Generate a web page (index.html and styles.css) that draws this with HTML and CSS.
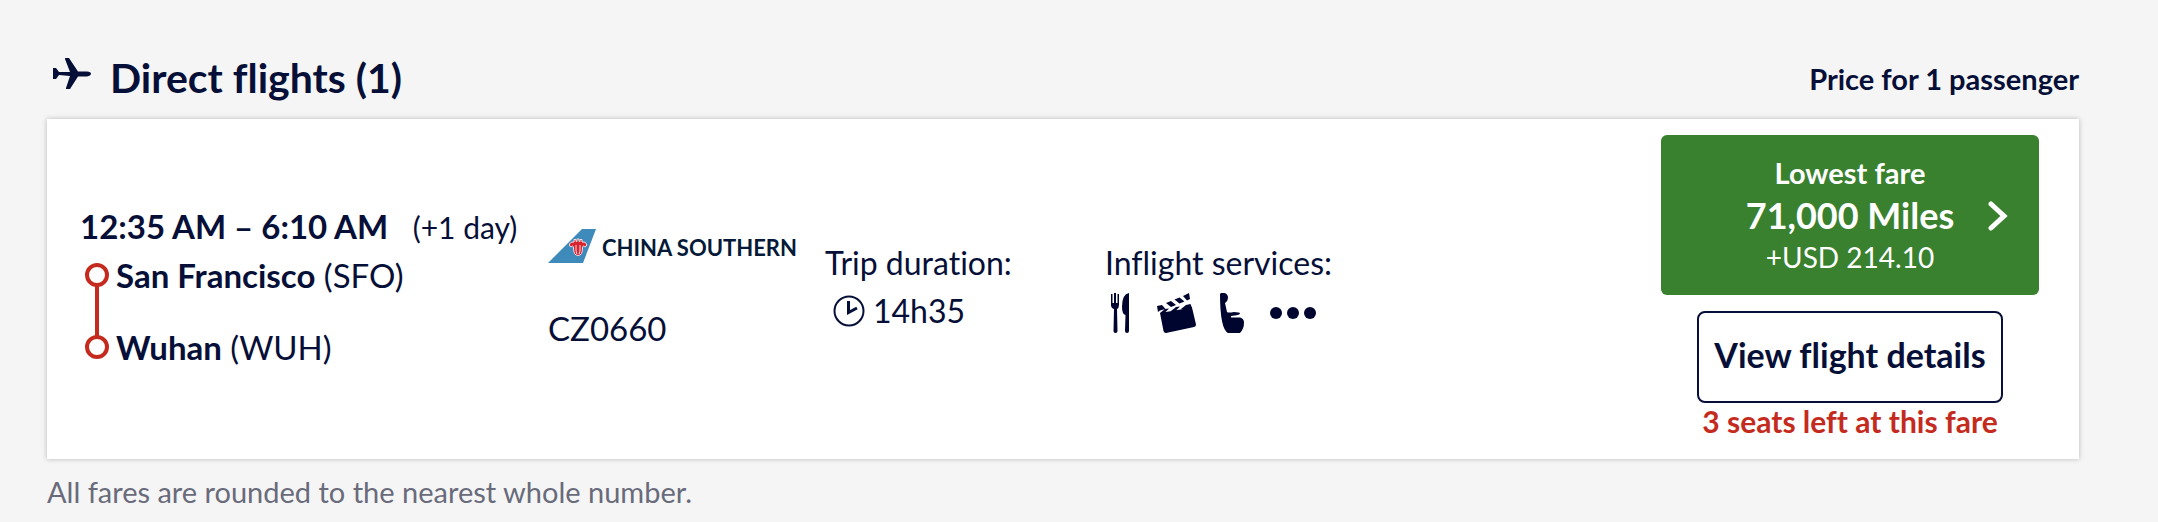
FILE: index.html
```
<!DOCTYPE html>
<html lang="en">
<head>
	<meta charset="utf-8">
	<title>Direct flights</title>
	<link rel="stylesheet" href="styles.css">
</head>
<body>
	<main class="results">
		<header class="results-head">
			<h2 class="title">
				<svg class="plane" viewBox="0 0 38 32" aria-hidden="true"><path d="M0 10h3l3 4h11L12 1V0h4l9 13.500h9c2.500 0 4 1 4 2.200s-1.500 2.300-4 2.800h-9L17 31h-4v-1l4-12L6 17l-3 4H0z"/></svg>
				Direct flights (1)
			</h2>
			<p class="price-for">Price for 1 passenger</p>
		</header>

		<section class="flight">
			<div class="route">
				<p class="times"><b>12:35 AM – 6:10 AM</b> <span class="plus-day">(+1 day)</span></p>
				<ul class="stops">
					<li class="stop"><b>San Francisco</b> (SFO)</li>
					<li class="stop"><b>Wuhan</b> (WUH)</li>
				</ul>
			</div>

			<div class="airline">
				<div class="carrier">
					<svg class="tail" viewBox="0 0 48 34" aria-hidden="true">
						<path fill="#3d8abb" d="M0 34 34 0h14L35 34z"/>
						<path fill="#d8232f" stroke="#f3dcdf" stroke-width="1" d="M21.500 15q1-2.500 4.500-2V10.500h2v2h1V10h2v2.500h1v-2h2V13q4-.5 4.500 2 .5 2.500-1.500 3l-1.500-1q-1 0-1 2 0 7.500-4.500 7.500T25.500 19q0-2-1-2L23 18q-2-.5-1.500-3z"/>
						<path fill="none" stroke="#f3dcdf" stroke-width="1" d="M28 16v5q0 2 1 4M32 16v5q0 2-1 4"/>
					</svg>
					<span class="carrier-name">CHINA SOUTHERN</span>
				</div>
				<p class="flight-no">CZ0660</p>
			</div>

			<div class="duration">
				<p>Trip duration:</p>
				<p class="time-taken">
					<svg class="clock" viewBox="0 0 32 32" aria-hidden="true"><circle cx="16" cy="16" r="14.500"/><path d="M15.500 6v11.500l8.500-4.500"/></svg>
					14h35
				</p>
			</div>

			<div class="services">
				<p>Inflight services:</p>
				<div class="service-icons">
					<svg class="meal" viewBox="0 0 18 40" role="img" aria-label="Meal"><path d="M0 1h1.500v9H3V0h2v10h1.500V1H8v11q0 3-2 4l.5 22q0 2-2 2t-2-2L3 16q-3-1-3-4zM18 0v38q0 2-2 2t-2-2l.5-16Q11 21 11 14q0-13 7-14z"/></svg>
					<svg class="film" viewBox="0 0 39 40" role="img" aria-label="Films"><path d="M3 20l32-5.500 4 17q0 2-2 2.500L9 40q-2 0-2.500-2zM0 13l5-1 3.500 4-5.500 1.500L1 19zM9 10l5-2 5 4-5 2zM17.500 6.500l5-2 5 4-5 2zM26 3l6-3 1 6-3 1.500zM3 20l5-4 4-.5-4 4zM14 18l5-4 4-.5-4 4zM24 16l5-4 4.500-1 1.500 4-7 1.500z"/></svg>
					<svg class="seat" viewBox="0 0 24 40" role="img" aria-label="Seat"><path d="M1 0q6-1 7 4 0 4-3 6l2 9q1 1 7 0 6 0 6 1.500T11 23v1.500h9q4 1 4 5Q24 36 20 40H8Q4 38 2 28 0 18 0 1z"/></svg>
					<svg class="more" viewBox="0 0 46 12" role="img" aria-label="More services"><circle cx="6" cy="6" r="6"/><circle cx="23" cy="6" r="6"/><circle cx="40" cy="6" r="6"/></svg>
				</div>
			</div>

			<div class="fare">
				<button class="fare-btn" type="button">
					<span class="fare-label">Lowest fare</span>
					<span class="miles">71,000 Miles</span>
					<span class="cash">+USD 214.10</span>
					<svg class="chevron" viewBox="0 0 20 30" aria-hidden="true"><path d="M3 3l13 12L3 27"/></svg>
				</button>
				<button class="details-btn" type="button">View flight details</button>
				<p class="seats-left">3 seats left at this fare</p>
			</div>
		</section>

		<p class="note">All fares are rounded to the nearest whole number.</p>
	</main>
</body>
</html>
```
FILE: styles.css
```
*, *::before, *::after{box-sizing: border-box;}

body{
	margin: 0;
	background-color: #f5f5f5;
	color: #050f37;
	font-family: Lato, "Open Sans", sans-serif;
	font-size: 32px;
	font-variant-ligatures: none;
	line-height: 48px;
}
h2, p, ul{margin: 0; padding: 0;}
svg{fill: currentColor; flex: none; display: block;}

.results{padding: 53px 79px 0 47px;}

.results-head{
	display: flex;
	justify-content: space-between;
	padding-bottom: 14px;
}
.title{
	display: flex;
	gap: 19px;
	padding-left: 6px;
	font-size: 41px;
	line-height: 50px;
}
.plane{width: 38px; height: 32px; margin-top: 5px;}
.price-for{
	font-size: 29px;
	font-weight: bold;
	line-height: 52px;
}

.flight{
	display: grid;
	grid-template-columns: 468fr 277fr 280fr 556fr 378px;
	align-items: center;
	padding: 16px 40px 20px 33px;
	background-color: white;
	box-shadow: 0 0 5px rgba(0,0,0,0.25);
}

.route, .airline{padding-bottom: 2px;}
.route{font-size: 33px;}
.times{white-space: nowrap;}
.plus-day{margin-left: 16px; font-size: 30px;}
.stops{
	display: flex;
	flex-direction: column;
	gap: 24px;
	list-style: none;
}
/* red dot and the line between the two airports */
.stop{position: relative; padding-left: 36px;}
.stop::before{
	content: "";
	position: absolute;
	left: 5px;
	top: 12px;
	width: 24px;
	height: 24px;
	border: 4px solid #c42b1e;
	border-radius: 50%;
}
.stop:first-child::after{
	content: "";
	position: absolute;
	left: 15px;
	top: 35px;
	width: 4px;
	height: 50px;
	background-color: #c42b1e;
}

.airline{display: grid; gap: 32px;}
.carrier{
	display: flex;
	align-items: center;
	gap: 6px;
}
.tail{width: 48px; height: 34px;}
.carrier-name{
	padding-top: 4px;
	color: #051a38;
	font-size: 22px;
	font-weight: bold;
	white-space: nowrap;
}
.flight-no{font-size: 33px;}

.time-taken{
	display: flex;
	align-items: center;
	gap: 8px;
	padding-left: 8px;
}
.clock{width: 32px; height: 32px;}
.clock path, .clock circle{
	fill: none;
	stroke: currentColor;
	stroke-width: 2;
}
.clock path{stroke-width: 3;}

.service-icons{
	display: flex;
	align-items: center;
	height: 48px;
	padding: 4px 0 0 6px;
	color: #000530;
}
.meal{width: 18px; height: 40px; margin-right: 28px;}
.film{width: 39px; height: 40px; margin-right: 24px;}
.seat{width: 24px; height: 40px; margin-right: 26px;}
.more{width: 46px; height: 12px;}

.fare{
	display: flex;
	flex-direction: column;
	align-items: center;
}
button{
	font-family: inherit;
	font-variant-ligatures: none;
	cursor: pointer;
}
.fare-btn{
	position: relative;
	display: flex;
	flex-direction: column;
	align-items: center;
	width: 100%;
	margin-bottom: 16px;
	padding: 17px 0;
	border: 0;
	border-radius: 6px;
	background-color: #39812f;
	color: white;
	font-size: 28px;
	line-height: 42px;
}
.fare-label{font-size: 29px; font-weight: bold;}
.miles{font-size: 36px; font-weight: bold;}
.chevron{
	position: absolute;
	right: 31px;
	top: 66px;
	width: 20px;
	height: 30px;
}
.chevron path{
	fill: none;
	stroke: currentColor;
	stroke-width: 5;
	stroke-linecap: round;
}
.details-btn{
	padding: 20px 15px 24px;
	border: 2px solid #050f37;
	border-radius: 8px;
	background-color: white;
	color: #050f37;
	font-size: 34px;
	font-weight: bold;
	line-height: 44px;
}
.seats-left{
	color: #c42b1e;
	font-size: 30px;
	font-weight: bold;
	line-height: 36px;
}

.note{
	padding-top: 9px;
	color: #696b7b;
	font-size: 29px;
}
```
